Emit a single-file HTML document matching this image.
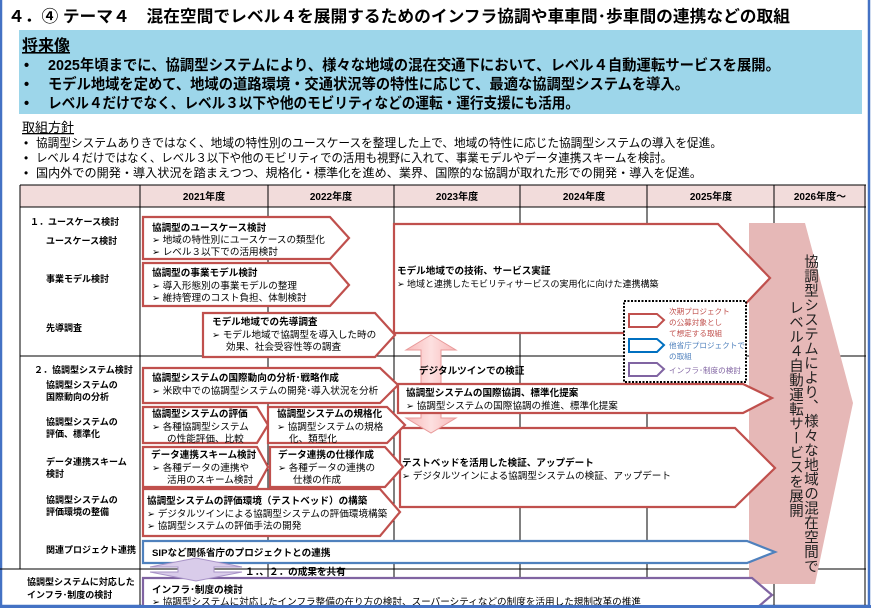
<!DOCTYPE html>
<html><head><meta charset="utf-8"><style>
html,body{margin:0;padding:0;background:#fff;}
body{width:871px;height:608px;overflow:hidden;position:relative;font-family:"Liberation Sans","Noto Sans CJK JP",sans-serif;}
svg{position:absolute;left:0;top:0;}
text{font-family:"Liberation Sans","Noto Sans CJK JP",sans-serif;}
</style></head><body>
<svg width="871" height="608" viewBox="0 0 871 608" xmlns="http://www.w3.org/2000/svg">
<defs>
<linearGradient id="pg" x1="0" x2="1" y1="0" y2="0"><stop offset="0" stop-color="#F8B8B8"/><stop offset="0.5" stop-color="#FDE0E0"/><stop offset="1" stop-color="#F8B8B8"/></linearGradient>
</defs>
<rect x="1" y="-2" width="868" height="608" fill="none" stroke="#4472C4" stroke-width="2.5"/>
<text x="8" y="22" font-size="16.2" font-weight="bold" fill="#000" textLength="782" lengthAdjust="spacingAndGlyphs">４．④ テーマ４　混在空間でレベル４を展開するためのインフラ協調や車車間･歩車間の連携などの取組</text>
<rect x="19" y="30" width="843" height="84" fill="#9DD6EA"/>
<text x="22" y="51" font-size="16" font-weight="bold" text-decoration="underline">将来像</text>
<g font-size="14.6" font-weight="bold" fill="#000">
<text x="24" y="70">•</text><text x="48" y="70" textLength="732" lengthAdjust="spacingAndGlyphs">2025年頃までに、協調型システムにより、様々な地域の混在交通下において、レベル４自動運転サービスを展開。</text>
<text x="24" y="89">•</text><text x="48" y="89" textLength="641" lengthAdjust="spacingAndGlyphs">モデル地域を定めて、地域の道路環境・交通状況等の特性に応じて、最適な協調型システムを導入。</text>
<text x="24" y="108">•</text><text x="48" y="108" textLength="531" lengthAdjust="spacingAndGlyphs">レベル４だけでなく、レベル３以下や他のモビリティなどの運転・運行支援にも活用。</text>
</g>
<text x="22" y="132" font-size="13" text-decoration="underline">取組方針</text>
<g font-size="11.8" fill="#000">
<text x="24" y="147">•</text><text x="36" y="147" textLength="686" lengthAdjust="spacingAndGlyphs">協調型システムありきではなく、地域の特性別のユースケースを整理した上で、地域の特性に応じた協調型システムの導入を促進。</text>
<text x="24" y="162">•</text><text x="36" y="162" textLength="636" lengthAdjust="spacingAndGlyphs">レベル４だけではなく、レベル３以下や他のモビリティでの活用も視野に入れて、事業モデルやデータ連携スキームを検討。</text>
<text x="24" y="177">•</text><text x="36" y="177" textLength="666" lengthAdjust="spacingAndGlyphs">国内外での開発・導入状況を踏まえつつ、規格化・標準化を進め、業界、国際的な協調が取れた形での開発・導入を促進。</text>
</g>
<rect x="20" y="185" width="846" height="22" fill="#F2DCDB"/>
<g stroke="#000" stroke-width="1" fill="none">
<line x1="20" y1="185" x2="866" y2="185"/>
<line x1="20" y1="207" x2="866" y2="207"/>
<line x1="20" y1="356" x2="866" y2="356"/>
<line x1="0" y1="569" x2="866" y2="569"/>
<line x1="20" y1="185" x2="20" y2="569"/>
<line x1="140" y1="185" x2="140" y2="608"/>
<line x1="268" y1="185" x2="268" y2="608"/>
<line x1="394" y1="185" x2="394" y2="608"/>
<line x1="520" y1="185" x2="520" y2="608"/>
<line x1="647" y1="185" x2="647" y2="608"/>
<line x1="774" y1="185" x2="774" y2="608"/>
<line x1="865" y1="185" x2="865" y2="608"/>
</g>
<g font-size="10" font-weight="bold" text-anchor="middle">
<text x="204" y="200">2021年度</text><text x="331" y="200">2022年度</text><text x="457" y="200">2023年度</text>
<text x="584" y="200">2024年度</text><text x="711" y="200">2025年度</text><text x="820" y="200">2026年度～</text>
</g>
<g font-size="9" font-weight="bold">
<text x="30" y="225">１．ユースケース検討</text>
<text x="46" y="244">ユースケース検討</text>
<text x="46" y="282">事業モデル検討</text>
<text x="46" y="331">先導調査</text>
<text x="34" y="373">２．協調型システム検討</text>
<text x="46" y="388">協調型システムの</text><text x="46" y="400">国際動向の分析</text>
<text x="46" y="425">協調型システムの</text><text x="46" y="437">評価、標準化</text>
<text x="46" y="465">データ連携スキーム</text><text x="46" y="477">検討</text>
<text x="46" y="503">協調型システムの</text><text x="46" y="515">評価環境の整備</text>
<text x="46" y="553">関連プロジェクト連携</text>
<text x="27" y="585">協調型システムに対応した</text><text x="27" y="598">インフラ･制度の検討</text>
</g>
<path d="M749 223 H805 L853 403 L815 584 H749 Z" fill="#E6B8B7"/>
<text x="810" y="254" font-size="14.5" fill="#222" style="writing-mode:tb;writing-mode:vertical-rl">協調型システムにより、様々な地域の混在空間で</text>
<text x="795" y="300" font-size="14.5" fill="#222" style="writing-mode:tb;writing-mode:vertical-rl">レベル４自動運転サービスを展開</text>
<g fill="#fff" stroke="#C0504D" stroke-width="2.2">
<path d="M143 217 H330 L349 238 L330 259 H143 Z"/>
<path d="M143 263 H330 L349 285 L330 306 H143 Z"/>
<path d="M394 224 H718 L770 278 L718 333 H394 Z"/>
<path d="M203 313 H375 L395 335 L375 357 H203 Z"/>
<path d="M143 368 H380 L398 385 L380 403 H143 Z"/>
<path d="M400 428 H735 L775 468 L735 507 H400 Z"/>
</g>
<path d="M431 335 L456 350 H441 V418 H456 L431 433 L406 418 H421 V350 H406 Z" fill="url(#pg)" stroke="#E89A9A" stroke-width="1"/>
<g fill="#fff" stroke="#C0504D" stroke-width="2.2">
<path d="M398 384 H743 L772 398 L743 413 H398 Z"/>
<path d="M143 407 H257 L268 425 L257 443 H143 Z"/>
<path d="M268 407 H387 L405 425 L387 443 H268 Z"/>
<path d="M143 447 H257 L268 467 L257 487 H143 Z"/>
<path d="M270 447 H385 L403 467 L385 487 H270 Z"/>
<path d="M143 489 H380 L400 512 L380 536 H143 Z"/>
</g>
<path d="M143 541 H747 L775 552 L747 563 H143 Z" fill="#fff" stroke="#4F81BD" stroke-width="2.2"/>
<path d="M143 578 H752 L772 595 L752 612 H143 Z" fill="#fff" stroke="#8064A2" stroke-width="2.2"/>
<path d="M150 567 L196 558 L242 567 H214 V572 H242 L196 581 L150 572 H178 V567 Z" fill="#D9CCEA" stroke="#A893C7" stroke-width="1"/>
<rect x="624" y="301" width="122" height="81" fill="#fff" stroke="#000" stroke-width="2" stroke-dasharray="2,1.5"/>
<g fill="#fff" stroke-width="2">
<path d="M629 314 H657 L664 320 L657 327 H629 Z" stroke="#C0504D"/>
<path d="M629 339 H657 L664 345 L657 352 H629 Z" stroke="#0070C0"/>
<path d="M629 363 H657 L664 369 L657 376 H629 Z" stroke="#8064A2"/>
</g>
<g font-size="7.6">
<text x="669" y="314" fill="#C0504D">次期プロジェクト</text>
<text x="669" y="325" fill="#C0504D">の公募対象とし</text>
<text x="669" y="336" fill="#C0504D">て想定する取組</text>
<text x="669" y="348" fill="#4F81BD">他省庁プロジェクトで</text>
<text x="669" y="359" fill="#4F81BD">の取組</text>
<text x="669" y="373" fill="#8064A2">インフラ･制度の検討</text>
</g>
<g font-size="9.6" fill="#000">
<g font-weight="bold">
<text x="152" y="231">協調型のユースケース検討</text>
<text x="152" y="276">協調型の事業モデル検討</text>
<text x="212" y="325">モデル地域での先導調査</text>
<text x="397" y="274">モデル地域での技術、サービス実証</text>
<text x="419" y="374">デジタルツインでの検証</text>
<text x="152" y="381">協調型システムの国際動向の分析･戦略作成</text>
<text x="406" y="396">協調型システムの国際協調、標準化提案</text>
<text x="152" y="417">協調型システムの評価</text>
<text x="277" y="417">協調型システムの規格化</text>
<text x="151" y="458">データ連携スキーム検討</text>
<text x="278" y="458">データ連携の仕様作成</text>
<text x="402" y="466">テストベッドを活用した検証、アップデート</text>
<text x="147" y="504">協調型システムの評価環境（テストベッド）の構築</text>
<text x="152" y="556">SIPなど関係省庁のプロジェクトとの連携</text>
<text x="245" y="575">１．、２．の成果を共有</text>
<text x="152" y="593">インフラ･制度の検討</text>
</g>
<text x="152" y="243">➢  地域の特性別にユースケースの類型化</text>
<text x="152" y="255">➢  レベル３以下での活用検討</text>
<text x="152" y="289">➢  導入形態別の事業モデルの整理</text>
<text x="152" y="301">➢  維持管理のコスト負担、体制検討</text>
<text x="212" y="338">➢  モデル地域で協調型を導入した時の</text>
<text x="226" y="350">効果、社会受容性等の調査</text>
<text x="397" y="287" font-size="9">➢  地域と連携したモビリティサービスの実用化に向けた連携構築</text>
<text x="152" y="394">➢  米欧中での協調型システムの開発･導入状況を分析</text>
<text x="406" y="409">➢  協調型システムの国際協調の推進、標準化提案</text>
<text x="152" y="430">➢  各種協調型システム</text>
<text x="167" y="442">の性能評価、比較</text>
<text x="277" y="430">➢  協調型システムの規格</text>
<text x="289" y="442">化、類型化</text>
<text x="152" y="471">➢  各種データの連携や</text>
<text x="167" y="483">活用のスキーム検討</text>
<text x="278" y="471">➢  各種データの連携の</text>
<text x="293" y="483">仕様の作成</text>
<text x="402" y="479">➢  デジタルツインによる協調型システムの検証、アップデート</text>
<text x="147" y="517">➢  デジタルツインによる協調型システムの評価環境構築</text>
<text x="147" y="529">➢  協調型システムの評価手法の開発</text>
<text x="152" y="605">➢  協調型システムに対応したインフラ整備の在り方の検討、スーパーシティなどの制度を活用した規制改革の推進</text>
</g>
<rect x="0" y="605" width="871" height="3" fill="#4472C4"/>
</svg>
</body></html>
